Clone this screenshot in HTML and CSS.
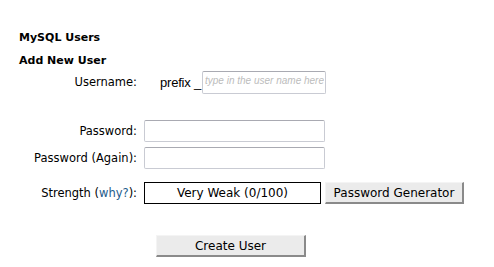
FILE: index.html
```html
<!DOCTYPE html>
<html lang="en">
<head>
<meta charset="UTF-8">
<title>MySQL Users</title>
<link rel="stylesheet" href="styles.css">
</head>
<body>
<div id="page">
	<h2 class="title">MySQL Users</h2>
	<h3 class="subtitle">Add New User</h3>
	<form id="adduser">
		<div class="row row-user">
			<label class="label">Username:</label>
			<div class="field">
				<span class="prefix">prefix _</span><input class="input input-user" type="text" placeholder="type in the user name here">
			</div>
		</div>
		<div class="row row-pass">
			<label class="label">Password:</label>
			<div class="field"><input class="input" type="password"></div>
		</div>
		<div class="row row-again">
			<label class="label">Password (Again):</label>
			<div class="field"><input class="input" type="password"></div>
		</div>
		<div class="row row-strength">
			<label class="label">Strength (<a href="#" class="why">why?</a>):</label>
			<div class="field">
				<div class="meter">Very Weak (0/100)</div>
				<button type="button" class="btn btn-gen">Password Generator</button>
			</div>
		</div>
		<div class="submit">
			<button type="button" class="btn btn-create">Create User</button>
		</div>
	</form>
</div>
</body>
</html>
```

FILE: styles.css
```css
body{
	margin: 0;
	background-color: #fff;
	font-family: "DejaVu Sans", Verdana, sans-serif;
	font-size: 11px;
	color: #000;
}
#page{
	padding: 31px 0 0 19px;
}
.title, .subtitle{
	margin: 0;
	font-size: 11px;
	font-weight: bold;
	line-height: 14px;
}
.subtitle{
	margin-top: 9px;
}
#adduser{
	margin: 0;
}
.row{
	display: flex;
	align-items: center;
}
.label{
	width: 118px;
	text-align: right;
	flex-shrink: 0;
	font-size: 11.5px;
}
.field{
	display: flex;
	align-items: center;
	margin-left: 7px;
}
.row-user{
	margin-top: 2px;
	height: 24px;
}
.row-user .field{
	margin-left: 23px;
}
.prefix{
	font-family: "Liberation Sans", Arial, sans-serif;
	font-size: 13px;
	letter-spacing: -0.2px;
}
.input{
	box-sizing: border-box;
	width: 181px;
	height: 22px;
	margin: 0;
	padding: 2px 3px;
	border: 1px solid #c9cbd3;
	border-top-color: #a9aab2;
	border-radius: 2px;
	background: #fff;
	font-family: "Liberation Sans", Arial, sans-serif;
	font-size: 11px;
}
.input-user{
	width: 124px;
	height: 23px;
	padding: 1px 1px 5px 2px;
	font-size: 10px;
	margin-left: 1px;
}
.input-user::placeholder{
	color: #bcbcbc;
	font-style: italic;
}
.row-pass{
	margin-top: 26px;
}
.row-again{
	margin-top: 5px;
}
.row-strength{
	margin-top: 13px;
}
.why{
	color: #1c5c8c;
	text-decoration: none;
}
.meter{
	box-sizing: border-box;
	width: 177px;
	height: 22px;
	border: 1px solid #000;
	text-align: center;
	line-height: 20px;
	font-size: 12px;
}
.btn{
	box-sizing: border-box;
	margin: 0;
	padding: 0;
	height: 22px;
	background: #ebebeb;
	border: 2px solid;
	border-color: #f4f4f4 #8a8a8a #8a8a8a #f4f4f4;
	border-width: 1px 2px 2px 1px;
	font-family: "DejaVu Sans", Verdana, sans-serif;
	font-size: 12px;
	color: #000;
}
.btn-gen{
	width: 139px;
	margin-left: 4px;
}
.btn-create{
	width: 150px;
}
.submit{
	margin: 31px 0 0 137px;
}
```
